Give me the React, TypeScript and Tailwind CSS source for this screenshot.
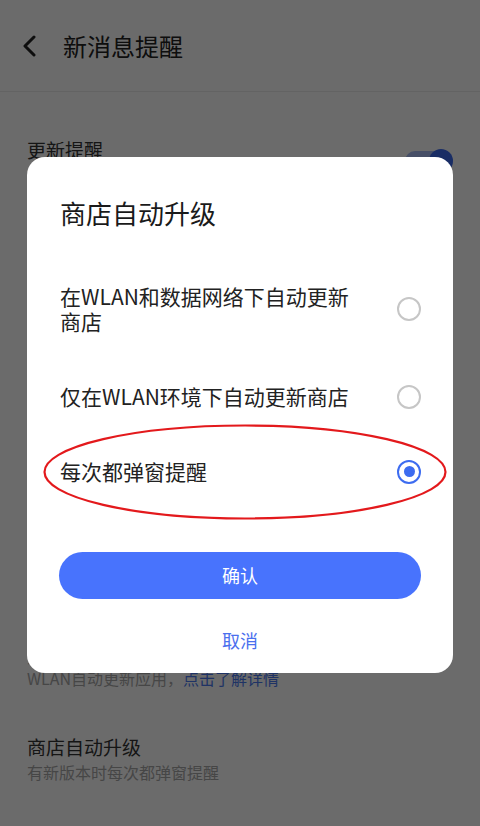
import React from "react";

const options = [
  { label: "在WLAN和数据网络下自动更新商店", checked: false },
  { label: "仅在WLAN环境下自动更新商店", checked: false },
  { label: "每次都弹窗提醒", checked: true },
];

const Radio: React.FC<{ checked: boolean }> = ({ checked }) =>
  checked ? (
    <div className="flex h-[24px] w-[24px] shrink-0 items-center justify-center rounded-full border-[2.5px] border-[#3d6cf0]">
      <div className="h-[11px] w-[11px] rounded-full bg-[#3d6cf0]" />
    </div>
  ) : (
    <div className="h-[24px] w-[24px] shrink-0 rounded-full border-[2.5px] border-[#c6c6c6]" />
  );

const App: React.FC = () => {
  return (
    <div className="relative h-[826px] w-[480px] overflow-hidden bg-white font-['Noto_Sans_CJK_SC',sans-serif]">
      {/* page underneath */}
      <div className="flex h-[92px] items-center border-b border-[#ececec] pl-[22px]">
        <svg width="14" height="22" viewBox="0 0 14 22" fill="none">
          <polyline
            points="12,2 3,11 12,20"
            stroke="#222"
            strokeWidth="3"
            strokeLinecap="round"
            strokeLinejoin="round"
          />
        </svg>
        <h1 className="ml-[27px] text-[24px] leading-[32px] text-[#222]">新消息提醒</h1>
      </div>

      <div className="flex items-center justify-between px-[27px] pt-[44px]">
        <div>
          <div className="text-[19px] leading-[28px] text-[#333]">更新提醒</div>
          <div className="text-[16px] leading-[22px] text-[#a8a8a8]">有可更新的应用时通知我</div>
        </div>
        <div className="relative h-[20px] w-[48px] rounded-full bg-[#a9bdf6]">
          <div className="absolute right-0 top-[-2px] h-[24px] w-[24px] rounded-full bg-[#3d6cf0]" />
        </div>
      </div>

      <div className="px-[27px] pt-[431px]">
        <div className="text-[19px] leading-[28px] text-[#333]">智能更新</div>
        <div className="text-[16px] leading-[22px] text-[#a8a8a8]">充电并连接WLAN时，</div>
        <div className="text-[16px] leading-[22px] text-[#a8a8a8]">
          WLAN自动更新应用，<span className="text-[#4a7af0]">点击了解详情</span>
        </div>
      </div>

      <div className="px-[27px] pt-[44px]">
        <div className="text-[19px] leading-[28px] text-[#333]">商店自动升级</div>
        <div className="text-[16px] leading-[22px] text-[#a8a8a8]">有新版本时每次都弹窗提醒</div>
      </div>

      {/* dim overlay + dialog */}
      <div className="absolute inset-0 bg-black/[0.58]">
        <div className="absolute left-[27px] top-[157px] w-[426px] rounded-[18px] bg-white pb-[9px]">
          <div className="px-[33px] pt-[40px] text-[26px] leading-[32px] text-[#1a1a1a]">商店自动升级</div>

          <div className="mt-[30px]">
            {options.map((o) => (
              <div key={o.label} className="flex items-center justify-between pl-[33px] pr-[32px] py-[25px]">
                <div className="w-[300px] text-[21px] leading-[25px] text-[#222]">{o.label}</div>
                <Radio checked={o.checked} />
              </div>
            ))}
          </div>

          <div className="px-[32px] pt-[43px]">
            <button className="flex h-[47px] w-full items-center justify-center rounded-full bg-[#4873fd] text-[18px] text-white">
              确认
            </button>
          </div>
          <div className="mt-[17px] flex h-[48px] items-center justify-center text-[18px] text-[#4a6fee]">取消</div>

          <svg
            className="absolute left-[16px] top-[267px]"
            width="404"
            height="96"
            viewBox="0 0 404 96"
            fill="none"
          >
            <ellipse cx="202" cy="48" rx="200.5" ry="46.5" stroke="#e3191c" strokeWidth="2.2" />
          </svg>
        </div>
      </div>
    </div>
  );
};

export default App;
